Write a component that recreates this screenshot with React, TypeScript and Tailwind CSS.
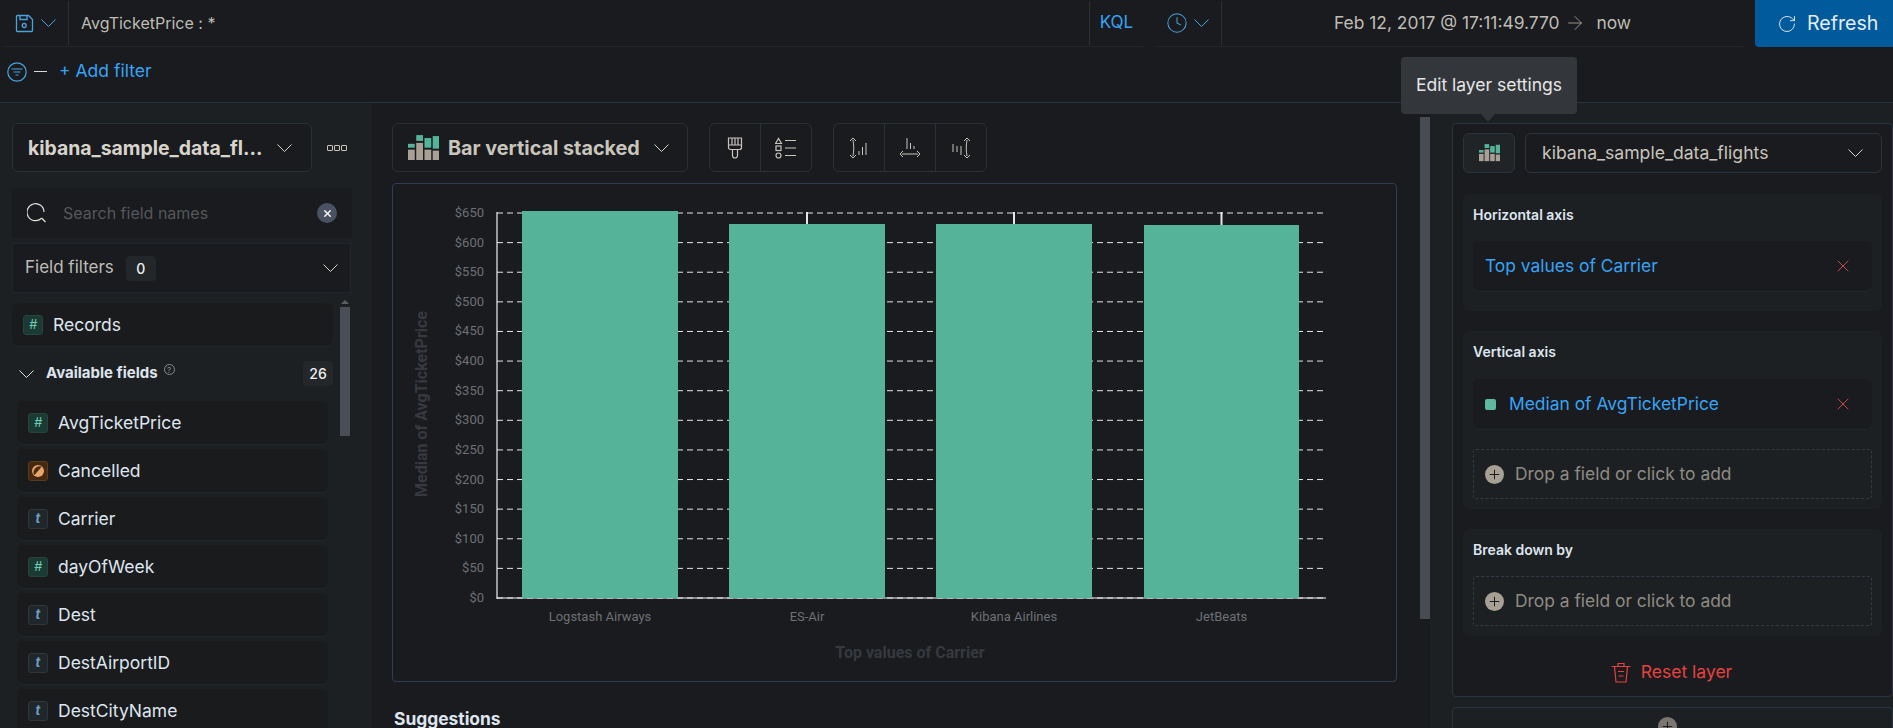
import { RotateCw, Clock, ArrowRight, Plus, X } from "lucide-react";

const yTicks = [650, 600, 550, 500, 450, 400, 350, 300, 250, 200, 150, 100, 50, 0];

const bars = [
  { label: "Logstash Airways", x: 522, top: 211, width: 156 },
  { label: "ES-Air", x: 729, top: 224, width: 156 },
  { label: "Kibana Airlines", x: 936, top: 224, width: 156 },
  { label: "JetBeats", x: 1144, top: 225, width: 155 },
];

const fields = [
  { name: "AvgTicketPrice", type: "number" },
  { name: "Cancelled", type: "boolean" },
  { name: "Carrier", type: "text" },
  { name: "dayOfWeek", type: "number" },
  { name: "Dest", type: "text" },
  { name: "DestAirportID", type: "text" },
  { name: "DestCityName", type: "text" },
];

// every chevron in the picture is the same wide, flat 15px one
function Chevron({ className }: { className: string }) {
  return (
    <svg width="15" height="8" viewBox="0 0 15 8" fill="none" stroke="currentColor" strokeWidth="1" className={className}>
      <path d="M0.5 0.5l7 7 7-7" />
    </svg>
  );
}

function SaveIcon() {
  return (
    <svg width="19" height="19" viewBox="0 0 19 19" fill="none" stroke="#4aa3df" strokeWidth="1.3">
      <path d="M1.5 2.5a1 1 0 0 1 1-1h11l4 4v11a1 1 0 0 1-1 1h-14a1 1 0 0 1-1-1z" />
      <path d="M5 1.5v4h7v-4" />
      <circle cx="9.2" cy="11.5" r="2" />
    </svg>
  );
}

function FilterIcon() {
  return (
    <svg width="20" height="20" viewBox="0 0 20 20" fill="none" stroke="#4aa3df" strokeWidth="1.2">
      <circle cx="10" cy="10" r="9.2" />
      <path d="M4.5 7h11M6.5 10h7M8.5 13h3" />
    </svg>
  );
}

function StackedBarIcon({ size }: { size: number }) {
  return (
    <svg width={size} height={size * 0.82} viewBox="0 0 32 26">
      <rect x="0" y="9" width="7" height="4" fill="#54b399" />
      <rect x="0" y="15" width="7" height="11" fill="#a8a094" />
      <rect x="8.5" y="0" width="7" height="6" fill="#54b399" />
      <rect x="8.5" y="8" width="7" height="18" fill="#a8a094" />
      <rect x="17" y="3" width="7" height="10" fill="#54b399" />
      <rect x="17" y="15" width="7" height="11" fill="#a8a094" />
      <rect x="25.5" y="1" width="6.5" height="13" fill="#54b399" />
      <rect x="25.5" y="16" width="6.5" height="10" fill="#a8a094" />
    </svg>
  );
}

function BrushIcon() {
  return (
    <svg width="16" height="22" viewBox="0 0 16 22" fill="none" stroke="#c9c5bd" strokeWidth="1.2">
      <path d="M1.5 1h13v9.5a2 2 0 0 1-2 2h-9a2 2 0 0 1-2-2z" />
      <path d="M1.5 8h13M5 1v7M8 1v7M11 1v7" />
      <path d="M5.5 12.5v6a2.5 2.5 0 0 0 5 0v-6" />
    </svg>
  );
}

function LegendIcon() {
  return (
    <svg width="22" height="22" viewBox="0 0 22 22" fill="none" stroke="#c9c5bd" strokeWidth="1.2">
      <path d="M3.5 1.5l3 5h-6z" />
      <rect x="1" y="9" width="5" height="4.5" />
      <circle cx="3.5" cy="18.5" r="2.5" />
      <path d="M10 3.5h11M10 11h11M10 18.5h11" />
    </svg>
  );
}

function AxisLeftIcon() {
  return (
    <svg width="20" height="22" viewBox="0 0 20 22" fill="none" stroke="#c9c5bd" strokeWidth="1">
      <path d="M4 3C5 8 5 14 4 19M1 4l3-3 3 3M1 18l3 3 3-3" />
      <path d="M10 18v-4M13.5 18v-8M17 18V6" />
    </svg>
  );
}

function AxisBottomIcon() {
  return (
    <svg width="22" height="22" viewBox="0 0 22 22" fill="none" stroke="#c9c5bd" strokeWidth="1">
      <path d="M3 17h16M4 14l-3 3 3 3M18 14l3 3-3 3" />
      <path d="M8 1v11M11.5 6v6M15 9v3" />
    </svg>
  );
}

function AxisRightIcon() {
  return (
    <svg width="20" height="22" viewBox="0 0 20 22" fill="none" stroke="#c9c5bd" strokeWidth="1">
      <path d="M16 3C15 8 15 14 16 19M13 4l3-3 3 3M13 18l3 3 3-3" />
      <path d="M2 15V7M6 15v-6M10 18v-9" />
    </svg>
  );
}

function SearchIcon() {
  return (
    <svg width="20" height="20" viewBox="0 0 20 20" fill="none" stroke="#e4e1da" strokeWidth="1.2">
      <path d="M14.5 15.2A8.5 8.5 0 1 1 17 9" />
      <path d="M14.5 15l4 4" />
    </svg>
  );
}

function TrashIcon() {
  return (
    <svg width="20" height="21" viewBox="0 0 20 21" fill="none" stroke="#e7423f" strokeWidth="1.2">
      <path d="M0.5 4.5h19M7 4.5V1.5h6v3" />
      <path d="M3.5 4.5l1.5 15.5h10l1.5-15.5" />
      <path d="M7 9.5h6M7.5 14h5" />
    </svg>
  );
}

function BooleanGlyph() {
  return (
    <svg width="12" height="12" viewBox="0 0 12 12">
      <circle cx="6" cy="6" r="6" fill="#e9a56c" />
      <path d="M2 10 A 6 6 0 0 1 10 2 Z" fill="#4a2c15" transform="rotate(-4 6 6)" />
    </svg>
  );
}

function TypeIcon({ type }: { type: string }) {
  if (type === "number") {
    return (
      <span className="flex h-5 w-5 shrink-0 items-center justify-center rounded-[3px] border border-[#24463f] bg-[#1b3a34] text-[13px] italic text-[#6dccb1]">
        #
      </span>
    );
  }
  if (type === "boolean") {
    return (
      <span className="flex h-5 w-5 shrink-0 items-center justify-center rounded-[3px] border border-[#5a3a20] bg-[#45290f]">
        <BooleanGlyph />
      </span>
    );
  }
  return (
    <span className="flex h-5 w-5 shrink-0 items-center justify-center rounded-[3px] border border-[#30363b] bg-[#1f272b] text-[13px] font-bold italic text-[#6f9ec0]">
      t
    </span>
  );
}

function FieldCard({ name, type, wide }: { name: string; type: string; wide?: boolean }) {
  return (
    <div
      className={
        wide
          ? "flex h-[43px] w-[321px] shrink-0 items-center gap-[10px] rounded-md bg-[#191b1d] pl-[11px] shadow-[0_1px_2px_#24282b]"
          : "ml-[5px] flex h-[43px] w-[311px] shrink-0 items-center gap-[10px] rounded-md bg-[#191b1d] pl-[11px] shadow-[0_1px_2px_#24282b]"
      }
    >
      <TypeIcon type={type} />
      <span className="mt-[2px] text-[17.5px] text-[#dfe5ef]">{name}</span>
    </div>
  );
}

function Chart() {
  // the svg starts at the panel's inner corner, page offset (393, 184)
  const ox = 393;
  const oy = 184;
  const yFor = (v: number) => 598 - (v / 650) * 385;
  return (
    <svg width="1003" height="497" className="block" style={{ fontFamily: "Roboto, sans-serif" }}>
      {yTicks.map((t) => (
        <g key={t}>
          <text x={484 - ox} y={yFor(t) - oy + 4} textAnchor="end" fontSize="13" fill="#6d7075">
            ${t}
          </text>
          <line
            x1={497 - ox}
            x2={1323 - ox}
            y1={yFor(t) - oy}
            y2={yFor(t) - oy}
            stroke="#e6e6e6"
            strokeWidth="1"
            strokeDasharray="6 4"
          />
        </g>
      ))}
      <line x1={497 - ox} x2={497 - ox} y1={212 - oy} y2={599 - oy} stroke="#f2f2f2" strokeWidth="1.2" />
      <line x1={497 - ox} x2={1326 - ox} y1={598 - oy} y2={598 - oy} stroke="#f2f2f2" strokeWidth="1.2" />
      {bars.map((b) => (
        <g key={b.label}>
          {b.top > 212 && (
            <line
              x1={b.x + b.width / 2 - ox}
              x2={b.x + b.width / 2 - ox}
              y1={212 - oy}
              y2={b.top - oy}
              stroke="#e6e6e6"
              strokeWidth="2"
            />
          )}
          <rect x={b.x - ox} y={b.top - oy} width={b.width} height={598 - b.top} fill="#54b399" />
          <text x={b.x + b.width / 2 - ox} y={621 - oy} textAnchor="middle" fontSize="13" fill="#6d7075">
            {b.label}
          </text>
        </g>
      ))}
      <text x={910 - ox} y={658 - oy} textAnchor="middle" fontSize="16" fontWeight="700" fill="#363940">
        Top values of Carrier
      </text>
      <text
        transform={`translate(${427 - ox} ${404 - oy}) rotate(-90)`}
        textAnchor="middle"
        fontSize="16"
        fontWeight="700"
        fill="#363940"
      >
        Median of AvgTicketPrice
      </text>
    </svg>
  );
}

function DropZone() {
  return (
    <div className="flex h-[50px] items-center gap-[11px] rounded-[3px] border border-dashed border-[#343a45] pl-[11px]">
      <span className="flex h-[19px] w-[19px] items-center justify-center rounded-full bg-[#a8a094] text-[#1a1c1f]">
        <Plus size={15} strokeWidth={1.6} />
      </span>
      <span className="text-[17.4px] text-[#8f8b82]">Drop a field or click to add</span>
    </div>
  );
}

function DimensionItem({ label, swatch }: { label: string; swatch?: boolean }) {
  return (
    <div className="flex h-[50px] items-center rounded-md bg-[#191b1e] pl-3 pr-[19px] shadow-[0_1px_1px_#24282b]">
      {swatch && <span className="mr-[13px] h-[11px] w-[11px] rounded-[2px] bg-[#5fb8a0]" />}
      <span className="flex-1 text-[17.4px] text-[#38a3f5]">{label}</span>
      <X size={20} strokeWidth={1} className="text-[#e7544f]" />
    </div>
  );
}

export default function App() {
  return (
    <div
      className="relative flex h-[728px] w-[1893px] flex-col overflow-hidden bg-[#191b1e] text-[#dfe5ef]"
      style={{ fontFamily: "Inter, sans-serif" }}
    >
      {/* query bar */}
      <div className="flex h-[47px] shrink-0 items-start pl-[3px]">
        <div className="flex h-[47px] w-[1140px] items-center border-b border-[#23272c]">
          <div className="flex h-[44px] w-[66px] items-center border-r border-[#2c3036] pl-3">
            <SaveIcon />
            <Chevron className="ml-[7px] text-[#4aa3df]" />
          </div>
          <span className="ml-3 flex-1 text-[16px] text-[#bfbcb5]">AvgTicketPrice : *</span>
          <div className="flex h-[44px] w-[54px] items-center justify-center border-l border-[#2c3036] text-[17px] text-[#38a3f5]">
            KQL
          </div>
        </div>
        <div className="ml-3 flex h-[47px] w-[588px] items-center border-b border-[#23272c]">
          <div className="flex h-[44px] w-[67px] items-center border-r border-[#2c3036] pl-[11px]">
            <Clock size={22} strokeWidth={1.1} className="text-[#4aa3df]" />
            <Chevron className="ml-[6px] text-[#4aa3df]" />
          </div>
          <div className="ml-[112px] flex items-center text-[17.4px] text-[#bfbcb5]">
            <span>Feb 12, 2017 @ 17:11:49.770</span>
            <ArrowRight size={22} strokeWidth={1} className="ml-[5px] mr-[10px] text-[#a8a094]" />
            <span>now</span>
          </div>
        </div>
        <div className="ml-[12px] flex h-[47px] flex-1 items-center rounded-bl-[4px] bg-[#005a9c] pl-[22px] text-[19.6px] text-[#e6edf3]">
          <RotateCw size={20} strokeWidth={1.1} className="mr-[10px]" />
          Refresh
        </div>
      </div>

      {/* filter bar */}
      <div className="flex h-[56px] shrink-0 items-center border-b border-[#2a3440] pb-[6px] pl-[7px]">
        <FilterIcon />
        <span className="ml-[7px] h-[1px] w-[13px] bg-[#d8d8d8]" />
        <span className="ml-[12px] text-[17.5px] text-[#38a3f5]">+ Add filter</span>
      </div>

      <div className="flex min-h-0 flex-1 overflow-hidden">
        {/* field list */}
        <aside className="flex w-[372px] shrink-0 flex-col overflow-hidden bg-[#1c2022] pl-3 pt-5">
          <div className="flex shrink-0 items-center">
            <div className="flex h-[49px] w-[300px] items-center justify-between rounded-md border border-[#2a3038] bg-[#191b1e] pl-[15px] pr-[19px]">
              <span className="mt-[2px] text-[19.4px] font-bold text-[#d8d4cc]">kibana_sample_data_fl...</span>
              <Chevron className="text-[#d8d4cc]" />
            </div>
            <div className="ml-[15px] flex gap-[1px]">
              <span className="h-[6px] w-[6px] rounded-[1px] border border-[#c9c5bd]" />
              <span className="h-[6px] w-[6px] rounded-[1px] border border-[#c9c5bd]" />
              <span className="h-[6px] w-[6px] rounded-[1px] border border-[#c9c5bd]" />
            </div>
          </div>
          <div className="mt-[16px] flex h-[50px] w-[340px] shrink-0 items-center bg-[#191b1e] px-[15px]">
            <SearchIcon />
            <span className="ml-4 flex-1 text-[16px] text-[#55575a]">Search field names</span>
            <span className="flex h-5 w-5 items-center justify-center rounded-full bg-[#4a5163]">
              <X size={11} strokeWidth={3.4} className="text-[#f0f0f0]" />
            </span>
          </div>
          <div className="mt-[5px] flex h-[50px] w-[339px] shrink-0 items-center border border-[#20252f] bg-[#191b1e] px-3">
            <span className="text-[17px] text-[#bfbcb5]">Field filters</span>
            <span className="ml-3 flex h-[25px] w-[30px] items-center justify-center rounded-[4px] bg-[#24272a] text-[14px] font-medium text-[#eeeeee]">
              0
            </span>
            <Chevron className="ml-auto text-[#d8d4cc]" />
          </div>
          <div className="mt-[7px] flex min-h-0 flex-1">
            <div className="mt-[3px] flex w-[321px] flex-col">
              <FieldCard name="Records" type="number" wide />
              <div className="mt-[15px] flex h-[25px] shrink-0 items-center pl-[7px]">
                <Chevron className="text-[#e4e1da]" />
                <span className="ml-[12px] text-[15px] font-bold text-[#dfe5ef]">Available fields</span>
                <span className="mb-2 ml-[6px] flex h-[11px] w-[11px] items-center justify-center rounded-full border border-[#8a8a8a] text-[8px] text-[#8a8a8a]">
                  ?
                </span>
                <span className="ml-auto flex h-[25px] w-[30px] items-center justify-center rounded-[4px] bg-[#24272a] text-[14px] font-medium text-[#eeeeee]">
                  26
                </span>
              </div>
              <div className="mt-[15px] flex shrink-0 flex-col gap-[5px]">
                {fields.map((f) => (
                  <FieldCard key={f.name} name={f.name} type={f.type} />
                ))}
              </div>
            </div>
            <div className="ml-[7px] flex w-[10px] flex-col items-center">
              <span className="h-0 w-0 border-x-[4px] border-b-[4px] border-x-transparent border-b-[#5a5e66]" />
              <span className="mt-[3px] h-[129px] w-[10px] bg-[#4a4e56]" />
            </div>
          </div>
        </aside>

        {/* workspace */}
        <main className="flex w-[1048px] shrink-0 flex-col pl-5 pt-5">
          <div className="flex shrink-0 items-center">
            <div className="flex h-[49px] w-[296px] items-center rounded-md border border-[#2a3038] pl-[15px]">
              <StackedBarIcon size={31} />
              <span className="ml-[9px] mt-[2px] text-[19.8px] font-bold text-[#c9c5bd]">Bar vertical stacked</span>
              <Chevron className="ml-[14px] text-[#d8d4cc]" />
            </div>
            <div className="ml-[21px] flex h-[49px] overflow-hidden rounded-md border border-[#2a3038]">
              <div className="flex w-[51px] items-center justify-center border-r border-[#2a3038]">
                <BrushIcon />
              </div>
              <div className="flex w-[50px] items-center justify-center">
                <LegendIcon />
              </div>
            </div>
            <div className="ml-[21px] flex h-[49px] overflow-hidden rounded-md border border-[#2a3038]">
              <div className="flex w-[51px] items-center justify-center border-r border-[#2a3038]">
                <AxisLeftIcon />
              </div>
              <div className="flex w-[51px] items-center justify-center border-r border-[#2a3038]">
                <AxisBottomIcon />
              </div>
              <div className="flex w-[50px] items-center justify-center">
                <AxisRightIcon />
              </div>
            </div>
          </div>
          <div className="mt-[11px] h-[499px] w-[1005px] shrink-0 rounded-[4px] border border-[#2f3e54]">
            <Chart />
          </div>
          <div className="ml-[2px] mt-[24px] shrink-0 text-[17.4px] font-bold text-[#dfe5ef]">Suggestions</div>
        </main>

        {/* scrollbar between workspace and layer panel */}
        <div className="mt-[14px] h-[502px] w-[10px] shrink-0 bg-[#474b53]" />

        {/* layer panel */}
        <aside className="flex min-w-0 flex-1 flex-col overflow-hidden bg-[#1c2022] pl-[22px] pt-5">
          <div className="h-[574px] shrink-0 rounded-[4px] border border-[#2a3440] bg-[#191b1e] px-[10px] pt-[9px]">
            <div className="flex items-center gap-[10px]">
              <div className="flex h-[40px] w-[52px] items-center justify-center rounded-md border border-[#2a3440] bg-[#212427]">
                <StackedBarIcon size={21} />
              </div>
              <div className="flex h-[40px] flex-1 items-center justify-between rounded-md border border-[#2a3440] bg-[#191b1e] pl-4 pr-[18px]">
                <span className="text-[17.6px] text-[#c9c5bd]">kibana_sample_data_flights</span>
                <Chevron className="text-[#d8d4cc]" />
              </div>
            </div>
            <section className="mt-[21px] h-[117px] rounded-md bg-[#1c2022] px-[10px] pt-[12px]">
              <h3 className="text-[14px] font-semibold leading-[18px] text-[#dfe5ef]">Horizontal axis</h3>
              <div className="mt-[17px]">
                <DimensionItem label="Top values of Carrier" />
              </div>
            </section>
            <section className="mt-[20px] h-[178px] rounded-md bg-[#1c2022] px-[10px] pt-[12px]">
              <h3 className="text-[14px] font-semibold leading-[18px] text-[#dfe5ef]">Vertical axis</h3>
              <div className="mt-[18px]">
                <DimensionItem label="Median of AvgTicketPrice" swatch />
              </div>
              <div className="mt-[20px]">
                <DropZone />
              </div>
            </section>
            <section className="mt-[20px] h-[107px] rounded-md bg-[#1c2022] px-[10px] pt-[12px]">
              <h3 className="text-[14px] font-semibold leading-[18px] text-[#dfe5ef]">Break down by</h3>
              <div className="mt-[17px]">
                <DropZone />
              </div>
            </section>
            <div className="mt-[23px] flex items-center justify-center gap-[10px] pr-[2px] text-[17.5px] text-[#e7423f]">
              <TrashIcon />
              Reset layer
            </div>
          </div>
          <div className="mt-[10px] flex flex-1 justify-center rounded-t-[4px] border border-b-0 border-[#2a3440] bg-[#1c2022] pr-[10px] pt-[9px]">
            <span className="flex h-[19px] w-[19px] shrink-0 items-center justify-center rounded-full bg-[#7a7770] text-[#1a1c1f]">
              <Plus size={15} strokeWidth={1.6} />
            </span>
          </div>
        </aside>
      </div>

      {/* tooltip */}
      <div className="absolute left-[1401px] top-[57px] flex h-[57px] w-[176px] items-center justify-center rounded-[4px] bg-[#33373b] text-[17.5px] text-[#e6e6e6]">
        Edit layer settings
        <span className="absolute left-[80px] top-full h-0 w-0 border-x-[7px] border-t-[8px] border-x-transparent border-t-[#33373b]" />
      </div>
    </div>
  );
}
